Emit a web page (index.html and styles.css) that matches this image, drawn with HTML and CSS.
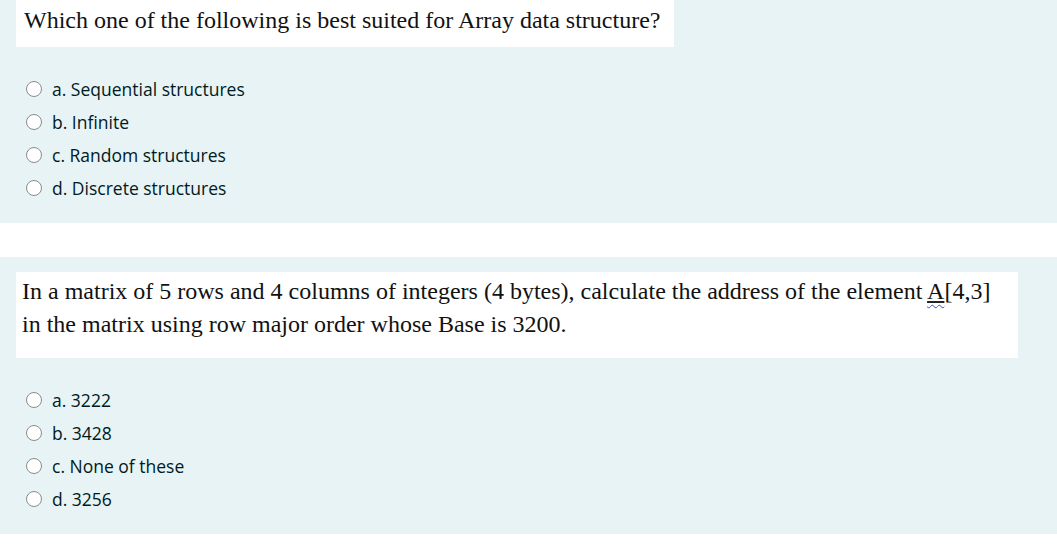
FILE: index.html
```html
<!DOCTYPE html>
<html>
<head>
<meta charset="utf-8">
<link rel="stylesheet" href="styles.css">
</head>
<body>
<div class="que q1">
  <div class="qtext">Which one of the following is best suited for Array data structure?</div>
  <div class="answers">
    <label class="opt"><span class="radio"></span><span>a. Sequential structures</span></label>
    <label class="opt"><span class="radio"></span><span>b. Infinite</span></label>
    <label class="opt"><span class="radio"></span><span>c. Random structures</span></label>
    <label class="opt"><span class="radio"></span><span>d. Discrete structures</span></label>
  </div>
</div>
<div class="que q2">
  <div class="qtext wide">In a matrix of 5 rows and 4 columns of integers (4 bytes), calculate the address of the element <span class="ul"><span class="sq">A</span></span>[4,3] in the matrix using row major order whose Base is 3200.</div>
  <div class="answers">
    <label class="opt"><span class="radio"></span><span>a. 3222</span></label>
    <label class="opt"><span class="radio"></span><span>b. 3428</span></label>
    <label class="opt"><span class="radio"></span><span>c. None of these</span></label>
    <label class="opt"><span class="radio"></span><span>d. 3256</span></label>
  </div>
</div>
</body>
</html>
```
FILE: styles.css
```css
html, body {
  margin: 0;
  padding: 0;
  background: #ffffff;
}
body {
  width: 1057px;
  height: 559px;
  overflow: hidden;
  font-family: "Open Sans", "Noto Sans", sans-serif;
  color: #001a1e;
}
.que {
  background: #e7f3f5;
  padding: 0 0 0 16px;
  display: flex;
  flex-direction: column;
}
.q1 {
  height: 223px;
  box-sizing: border-box;
}
.q2 {
  margin-top: 34px;
  padding-top: 15px;
  height: 277px;
  box-sizing: border-box;
}
.qtext {
  background: #ffffff;
  font-family: "Liberation Serif", "Times New Roman", serif;
  font-size: 24px;
  color: #111111;
  width: 658px;
  box-sizing: border-box;
  padding: 6px 6px 0 8px;
  height: 47px;
  line-height: 28px;
}
.qtext.wide {
  width: 1002px;
  height: 86px;
  padding: 3px 6px 0 6px;
  line-height: 33px;
}
.answers {
  display: flex;
  flex-direction: column;
  padding-left: 10px;
}
.q1 .answers { margin-top: 25px; }
.q2 .answers { margin-top: 25px; }
.opt {
  display: flex;
  align-items: center;
  height: 33px;
  font-size: 17.5px;
  gap: 10px;
}
.radio {
  width: 14px;
  height: 14px;
  border: 1.5px solid #8a8a8a;
  border-radius: 50%;
  background: #ffffff;
  flex: none;
}
.ul {
  text-decoration: underline solid #222;
  text-underline-offset: 2px;
}
.sq {
  text-decoration: underline wavy #2f4fd8;
  text-decoration-thickness: 1px;
  text-underline-offset: 5px;
}
```
